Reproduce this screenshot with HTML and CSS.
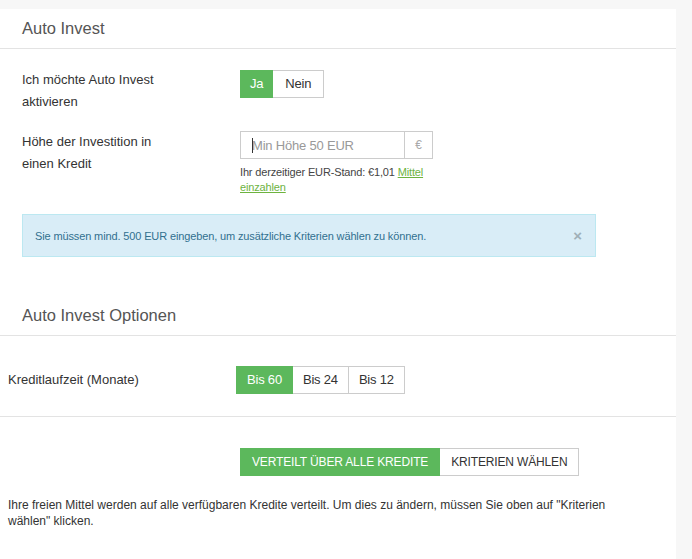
FILE: index.html
```html
<!DOCTYPE html>
<html lang="de">
<head>
<meta charset="utf-8">
<title>Auto Invest</title>
<link rel="stylesheet" href="styles.css">
</head>
<body>
<div class="panel">
  <div class="panel-heading">Auto Invest</div>
  <div class="panel-body">
    <div class="form-row first">
      <div class="label">Ich möchte Auto Invest aktivieren</div>
      <div class="control">
        <div class="btn-group">
          <span class="btn small active">Ja</span><span class="btn no">Nein</span>
        </div>
      </div>
    </div>
    <div class="form-row second">
      <div class="label">Höhe der Investition in einen Kredit</div>
      <div class="control">
        <div class="input-group">
          <div class="input-wrap"><input class="amount" type="text" placeholder="Min Höhe 50 EUR"><span class="caret"></span></div>
          <span class="addon">€</span>
        </div>
        <div class="help">Ihr derzeitiger EUR-Stand: €1,01 <a href="#">Mittel</a><br><a href="#">einzahlen</a></div>
      </div>
    </div>
    <div class="alert">
      <span>Sie müssen mind. 500 EUR eingeben, um zusätzliche Kriterien wählen zu können.</span>
      <span class="close">×</span>
    </div>
  </div>
  <div class="section-heading">Auto Invest Optionen</div>
  <div class="options-row">
    <div class="label wide">Kreditlaufzeit (Monate)</div>
    <div class="btn-group">
      <span class="btn active">Bis 60</span><span class="btn">Bis 24</span><span class="btn">Bis 12</span>
    </div>
  </div>
  <div class="mode-row">
    <div class="btn-group">
      <span class="btn active caps">VERTEILT ÜBER ALLE KREDITE</span><span class="btn caps">KRITERIEN WÄHLEN</span>
    </div>
  </div>
  <p class="note">Ihre freien Mittel werden auf alle verfügbaren Kredite verteilt. Um dies zu ändern, müssen Sie oben auf "Kriterien wählen" klicken.</p>
</div>
</body>
</html>
```

FILE: styles.css
```css
* { box-sizing: border-box; }
html, body { margin: 0; padding: 0; }
body {
  background: #f7f7f7;
  font-family: "Liberation Sans", Arial, sans-serif;
  color: #333;
  font-size: 13px;
  height: 559px;
  overflow: hidden;
}
.panel {
  margin-top: 9px;
  width: 676px;
  height: 560px;
  background: #fff;
}
.panel-heading {
  height: 40px;
  line-height: 39px;
  padding-left: 22px;
  font-size: 16.5px;
  color: #555;
  border-bottom: 1px solid #e3e3e3;
}
.panel-body {
  padding: 20px 22px 0 22px;
}
.form-row {
  display: flex;
  align-items: flex-start;
}
.form-row.second { margin-top: 18px; }
.label {
  width: 218px;
  padding-right: 70px;
  line-height: 22px;
  font-size: 13px;
  color: #333;
}
.label.wide { width: 228px; padding-right: 0; }
.control { padding-top: 1px; }
.form-row.second .control { padding-top: 0; }
.btn-group { display: flex; }
.btn {
  display: inline-block;
  height: 28px;
  line-height: 26px;
  padding: 0 10px;
  border: 1px solid #ccc;
  background: #fff;
  color: #333;
  font-size: 13px;
  letter-spacing: -0.2px;
  white-space: nowrap;
}
.btn.small { padding: 0 9px; }
.btn.no { padding: 0 12px; }
.btn + .btn { border-left: none; }
.btn.active {
  background: #5cb85c;
  border-color: #5cb85c;
  color: #fff;
}
.btn.caps { padding: 0 11px; font-size: 12px; letter-spacing: -0.15px; }
.input-group {
  display: flex;
  width: 193px;
  height: 28px;
  border: 1px solid #ccc;
}
.input-wrap {
  position: relative;
  flex: 1;
}
.amount {
  width: 100%;
  height: 26px;
  border: none;
  outline: none;
  padding: 0 11px;
  font-family: "Liberation Sans", Arial, sans-serif;
  font-size: 13px;
  letter-spacing: -0.2px;
  color: #333;
}
.amount::placeholder { color: #999; }
.caret {
  position: absolute;
  left: 11px;
  top: 6px;
  width: 1px;
  height: 15px;
  background: #333;
}
.addon {
  width: 28px;
  border-left: 1px solid #ccc;
  text-align: center;
  line-height: 26px;
  color: #aaa;
  font-size: 12px;
}
.help {
  margin-top: 6px;
  width: 200px;
  font-size: 11px;
  line-height: 15px;
  letter-spacing: -0.15px;
  color: #444;
}
.help a { color: #6db33f; }
.alert {
  margin-top: 19px;
  width: 574px;
  height: 43px;
  padding: 0 13px 0 12px;
  display: flex;
  align-items: center;
  justify-content: space-between;
  background: #d9edf7;
  border: 1px solid #bce8f1;
  color: #31708f;
  font-size: 11px;
  letter-spacing: -0.13px;
}
.close {
  font-size: 15px;
  font-weight: bold;
  color: #9fb0b8;
  line-height: 1;
}
.section-heading {
  margin-top: 38px;
  height: 40px;
  line-height: 40px;
  padding-left: 22px;
  font-size: 16.5px;
  color: #555;
  border-bottom: 1px solid #e3e3e3;
  box-sizing: content-box;
}
.options-row {
  display: flex;
  align-items: center;
  padding: 30px 0 22px 8px;
  border-bottom: 1px solid #e3e3e3;
}
.mode-row {
  padding: 31px 0 0 240px;
}
.note {
  margin: 21px 0 0 0;
  padding: 0 40px 0 8px;
  font-size: 12px;
  line-height: 16px;
  color: #333;
}
```
